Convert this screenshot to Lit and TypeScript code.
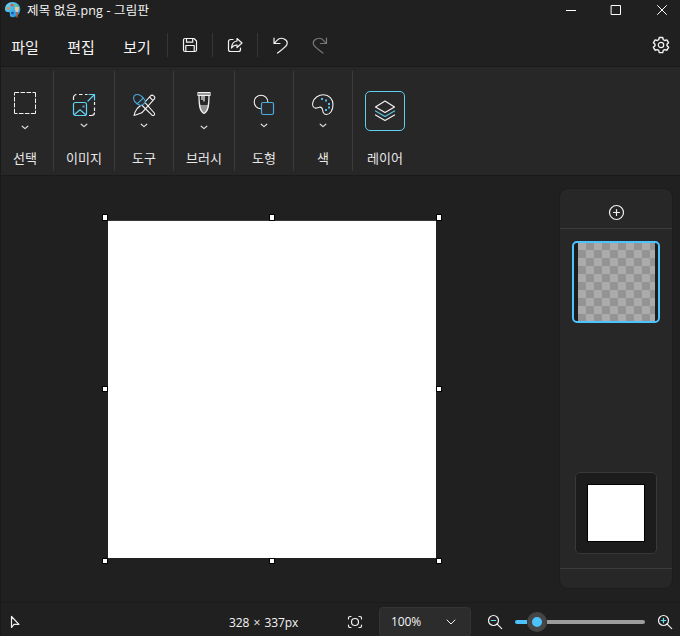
import { LitElement, html, css, svg, type TemplateResult } from 'lit';
import { customElement } from 'lit/decorators.js';

const icon = (w: number, h: number, body: TemplateResult) =>
  html`<svg width=${w} height=${h} viewBox="0 0 ${w} ${h}" fill="none" stroke="#f2f2f2" stroke-width="1.2" stroke-linecap="round" stroke-linejoin="round">${body}</svg>`;

const logo = icon(18, 18, svg`
  <defs><linearGradient id="pal" x1="0" y1="0" x2="1" y2="1"><stop offset="0" stop-color="#6cdff8"/><stop offset="1" stop-color="#1a86d8"/></linearGradient></defs>
  <path d="M8.500 1C12.500 1 16.300 4 16.300 8.300c0 4.500-3.500 7.900-7.500 7.900-2.200 0-3.300-1.200-2.900-3 .3-1.600-.4-2.400-2-2.200C2 11.200 1 10 1 8.300 1 4 4.300 1 8.500 1Z" fill="url(#pal)" stroke="none"/>
  <g stroke="none"><circle cx="8" cy="4.200" r="1.400" fill="#e8493f"/><circle cx="4.300" cy="7.300" r="1.400" fill="#f08a3c"/><circle cx="12" cy="4.500" r="1.300" fill="#66cf62"/><circle cx="8.500" cy="12" r="1.300" fill="#194f9c"/>
  <path d="M11 6h3.800v3.500H11z" fill="#f3c981"/><path d="M11 9h3.800l-.8 2h-2.200z" fill="#c6cbd0"/><path d="M12 11h1.900l-.2 5.500h-1.300z" fill="#bd5b2d"/></g>`);
const save = icon(16, 16, svg`
  <path d="M1.500 3a1.500 1.500 0 0 1 1.500-1.500h9L14.500 4v9a1.500 1.500 0 0 1-1.500 1.500H3A1.500 1.500 0 0 1 1.500 13Z"/>
  <path d="M4.500 1.500v3.700h6.200V1.500M3.800 14.500V8.500h8.400v6"/>`);
const share = icon(16, 16, svg`
  <path d="M6 2.500H3.500a2 2 0 0 0-2 2v8a2 2 0 0 0 2 2h8a2 2 0 0 0 2-2V11"/>
  <path d="M10 1.500 15 6l-5 4.500V8C7.300 8 5.800 9 4.500 11c.3-4 2.300-6.700 5.500-7z"/>`);
const undo = icon(17, 18, svg`<path d="M2 2v5.500h6M2.300 7.300 5 4.400C9-.1 17 3.500 14.700 9 14 10.800 10 13.500 5.500 17"/>`);
const redo = icon(17, 18, svg`<path stroke="#777" d="M14.500 2v5.500h-6M14.200 7.300 11.500 4.400C7.500-.1-.5 3.500 1.800 9 2.500 10.800 6.500 13.500 11 17"/>`);
const gear = icon(18, 18, svg`
  <path stroke-width="1.400" d="m7.300 1.500 3.400 0 .6 2.200 1.400.8 2.200-.6 1.700 2.900L15 8.200v1.600l1.600 1.500-1.700 2.900-2.200-.6-1.400.8-.6 2.200H7.300l-.6-2.200-1.400-.8-2.200.6-1.700-2.900L3 9.800V8.200L1.400 6.800l1.700-2.900 2.200.6 1.400-.8Z"/>
  <circle cx="9" cy="9" r="2.700"/>`);
const caret = icon(8, 5, svg`<path stroke="#ddd" d="M1.200 1.200 4 3.600l2.800-2.400"/>`);

const select = icon(24, 24, svg`<path stroke-width="1" stroke-linecap="butt" stroke-dasharray="4.600 1.400" d="M1.500 1.500h21M22.500 1.500v21M22.500 22.500h-21M1.500 22.500v-21"/>`);
const image = icon(24, 24, svg`
  <path stroke-linecap="butt" d="M1.500 7V4.500a3 3 0 0 1 3-3M7 1.500h3.500M13 1.500h2.500M22.500 9v3M22.500 14.500V18M22.500 19.500a3 3 0 0 1-3 3H17"/>
  <g stroke="#5fd5f3"><rect x="1.500" y="9.500" width="13" height="13" rx="2"/><path d="m2.500 21.500 5.500-4.700 5.500 4.700M16 8l6-6M17 1.500h5.500V7"/><rect x="10.500" y="12.500" width="2" height="2" stroke="none" fill="#4aa9d5"/></g>`);
const tools = icon(24, 24, svg`
  <g stroke-width="1.100">
  <path d="m13.500 8.500 4.800-5.300c2-2.400 5.800.4 3.900 3L9.800 19.800c-2 .8-4.800 2-7.800 2.700.6-2.800 1.700-5 3.200-7l4-3.500M18 4.500l2.800 2.800"/>
  <path d="m13.500 10.200 8.800 9.800c1 1.500-.8 3.200-2.300 2.200L10.200 12.500"/></g>
  <g stroke="#4ba9db" stroke-width="1.100"><path fill="#273238" d="M5 10.800 11.300 5l2 2.500c-.2 2.200-2.200 4.500-5 5Z"/><path d="M5 10.800C.7 8 .8 3 3.500 1.800 6.500.6 9 2.300 11.300 5"/></g>`);
const brush = icon(16, 24, svg`
  <path fill="#929292" stroke="none" d="M3 14h10c-.8 4-2.500 7-5 8-2.500-1-4.200-4-5-8Z"/>
  <path d="M2 1.500h12v3H2zM3 4.500c0 9 .5 16 5 18 4.500-2 5-9 5-18M6 5v3.500M8 5v5"/><path stroke="#999" stroke-width="2" stroke-linecap="butt" d="M2 3h12"/>`);
const shapes = icon(22, 22, svg`
  <circle cx="8" cy="8" r="6.800" stroke-width="1.100"/><rect x="8.500" y="8.500" width="12" height="12" rx="1.500" stroke="#4da9d8" fill="#262c30"/>`);
const palette = icon(24, 24, svg`
  <path stroke-width="1.100" d="M12.500 1.700C18 1.700 22 6 22 11.500c0 6-3 10-6.500 10-2.500 0-3.500-1.800-3.800-4-.3-2.500-1.500-3.800-3.600-3.200-1.600.4-2.200 1-3.600.8-2.500-.3-3.500-3.100-2.700-5.600C3.100 4.700 7.800 1.700 12.500 1.700Z"/>
  <g stroke="none" fill="#55b8ec"><rect x="10" y="5" width="2" height="2"/><rect x="14" y="6.500" width="2" height="2"/><rect x="17" y="10" width="2" height="2"/><rect x="17" y="13.500" width="2" height="2"/><rect x="14" y="16" width="2" height="2"/></g>`);
const layers = icon(24, 24, svg`
  <path d="M12 2 21.500 8 12 13.500 2.500 8Z"/><path stroke="#5cc5e6" d="M2.500 12 12 17.500 21.500 12"/><path d="m2.500 16 9.500 5.500L21.500 16"/>`);

const GROUPS = [
  { label: '선택', icon: select, w: 54, cls: 'low first' },
  { label: '이미지', icon: image, w: 60, cls: '' },
  { label: '도구', icon: tools, w: 58, cls: '' },
  { label: '브러시', icon: brush, w: 60, cls: 'low' },
  { label: '도형', icon: shapes, w: 58, cls: '' },
  { label: '색', icon: palette, w: 58, cls: '' },
];
const HANDLES = ['nw', 'n', 'ne', 'w', 'e', 'sw', 's', 'se'];

@customElement('app-root')
export class AppRoot extends LitElement {
  static styles = css`
    :host { display: flex; flex-direction: column; width: 680px; height: 636px; box-sizing: border-box; background: #202020; color: #f4f4f4; font-family: "Open Sans", "Noto Sans CJK KR", sans-serif; overflow: hidden; border-left: 1px solid #191919; }
    * { box-sizing: border-box; }
    svg { display: block; flex: none; }
    .title { height: 22px; flex: none; display: flex; align-items: center; padding: 0 12px 2px 3px; }
    .name { font-size: 12.5px; margin-left: 5px; line-height: 18px; padding-top: 2px; white-space: nowrap; letter-spacing: 0.16px; }
    .win { margin-left: auto; display: flex; gap: 34px; }
    .min { margin-right: -1px; }
    .menu { height: 44px; flex: none; display: flex; align-items: center; }
    .item { width: 56px; text-align: center; font-size: 15px; line-height: 20px; padding-top: 5px; }
    .item.first { width: 52px; padding-right: 4px; }
    .tool { width: 44px; display: flex; justify-content: center; padding-top: 2px; }
    .tool.wide { width: 45px; }
    .tool.redo { width: 34px; }
    .sep { width: 1px; height: 24px; background: #363636; margin-top: 2px; }
    .menu .sep.one { margin-left: 2px; }
    .gear { margin-left: auto; margin-right: 10px; padding-top: 2px; }
    .ribbon { height: 110px; flex: none; display: flex; background: #272727; border-top: 1px solid #1a1a1a; border-bottom: 1px solid #1a1a1a; padding: 4px 0; margin-left: -1px; }
    .group { display: flex; flex-direction: column; align-items: center; border-right: 1px solid #3b3b3b; box-sizing: content-box; height: 100px; }
    .group.first { box-sizing: border-box; padding-right: 3px; }
    .group.last { border: 0; width: 64px; }
    .glyph { height: 24px; margin-top: 22px; display: flex; align-items: center; }
    .low .glyph { margin-top: 20px; }
    .caret { margin-top: 6px; }
    .low .caret { margin-top: 10px; }
    .label { margin-top: auto; font-size: 13px; line-height: 18px; padding-bottom: 3px; height: 22px; white-space: nowrap; color: #e8e8e8; }
    .active { width: 40px; height: 40px; margin-top: 20px; border: 1px solid #5ecfee; border-radius: 5px; display: flex; align-items: center; justify-content: center; background: #292929; }
    .work { flex: 1; display: flex; min-height: 0; }
    .canvas { position: relative; width: 328px; height: 337px; margin: 45px 0 0 107px; background: #fff; flex: none; box-shadow: 0 -1px 0 #3a373a; }
    .handle { position: absolute; width: 6px; height: 6px; background: #fff; border: 1px solid #000; }
    .nw, .w, .sw { left: -6px; }
    .n, .s { left: 161px; }
    .ne, .e, .se { right: -6px; }
    .nw, .n, .ne { top: -7px; height: 7px; }
    .w, .e { top: 165px; }
    .sw, .s, .se { bottom: -6px; }
    .panel { width: 112px; height: 399px; margin: 13px 8px 0 auto; background: #272727; border-radius: 8px; display: flex; flex-direction: column; align-items: center; box-shadow: 0 0 0 1px #1c1c1c; }
    .add { height: 40px; width: 100%; border-bottom: 1px solid #3b3b3b; display: flex; justify-content: center; align-items: center; padding: 7px 0 0 1px; flex: none; }
    .thumb { width: 88px; height: 82px; margin-top: 12px; border: 2px solid #4cc2ff; border-radius: 5px; background: #1c1c1c; padding: 0 3px 0 4px; flex: none; }
    .checks { height: 100%; background: repeating-conic-gradient(#949494 0 25%, #ababab 0 50%) 0 -1px / 16px 16px; }
    .base { width: 82px; height: 82px; margin-top: auto; margin-bottom: 14px; background: #1c1c1c; border: 1px solid #393939; border-radius: 5px; display: flex; align-items: center; justify-content: center; }
    .sheet { width: 56px; height: 56px; background: #fff; outline: 1px solid #000; }
    .foot { width: 100%; height: 20px; border-top: 1px solid #3b3b3b; flex: none; }
    .status { height: 34px; flex: none; display: flex; align-items: center; border-top: 1px solid #1b1b1b; padding-top: 4px; }
    .cursor { margin-left: 8px; }
    .size { margin-left: auto; width: 71px; font-size: 12px; white-space: nowrap; line-height: 16px; word-spacing: 1.200px; letter-spacing: -0.1px; padding-top: 2px; }
    .fit { margin-left: 47px; }
    .zoom { width: 92px; height: 30px; margin-left: 16px; background: #2c2c2c; border: 1px solid #343434; border-radius: 4px; display: flex; align-items: center; justify-content: space-between; padding: 0 14px 0 11px; font-size: 12px; letter-spacing: -0.1px; }
    .minus { margin-left: 16px; }
    .slider { width: 130px; height: 20px; margin: 0 12px; display: flex; align-items: center; }
    .done { width: 12px; height: 4px; border-radius: 2px 0 0 2px; background: #4cc2ff; }
    .knob { width: 20px; height: 20px; border-radius: 50%; background: #4cc2ff; border: 5px solid #454545; flex: none; }
    .rest { flex: 1; height: 4px; border-radius: 0 2px 2px 0; background: #9c9c9c; }
    .plus { margin-right: 7px; }
  `;

  render() {
    return html`
      <div class="title">
        ${logo}<span class="name">제목 없음.png - 그림판</span>
        <div class="win">
          <div class="min">${icon(12, 12, svg`<path stroke="#fff" stroke-width="1" stroke-linecap="butt" d="M1 6.500h10"/>`)}</div>
          ${icon(12, 12, svg`<rect stroke="#fff" stroke-width="1" x="1.500" y="1.500" width="9" height="9"/>`)}
          ${icon(12, 12, svg`<path stroke="#fff" stroke-width="1" d="m1.500 1.500 9 9M10.500 1.500l-9 9"/>`)}
        </div>
      </div>
      <div class="menu">
        <div class="item first">파일</div><div class="item">편집</div><div class="item">보기</div>
        <div class="sep one"></div><div class="tool">${save}</div>
        <div class="sep"></div><div class="tool">${share}</div>
        <div class="sep"></div><div class="tool wide">${undo}</div><div class="tool redo">${redo}</div>
        <div class="gear">${gear}</div>
      </div>
      <div class="ribbon">
        ${GROUPS.map((g) => html`<div class="group ${g.cls}" style="width:${g.w}px">
          <div class="glyph">${g.icon}</div><div class="caret">${caret}</div><div class="label">${g.label}</div>
        </div>`)}
        <div class="group last"><div class="active">${layers}</div><div class="label">레이어</div></div>
      </div>
      <div class="work">
        <div class="canvas">${HANDLES.map((h) => html`<i class="handle ${h}"></i>`)}</div>
        <div class="panel">
          <div class="add">${icon(17, 17, svg`<circle cx="8.500" cy="8.500" r="7"/><path d="M8.500 5.500v6M5.500 8.500h6"/>`)}</div>
          <div class="thumb"><div class="checks"></div></div>
          <div class="base"><div class="sheet"></div></div>
          <div class="foot"></div>
        </div>
      </div>
      <div class="status">
        <div class="cursor">${icon(12, 14, svg`<path d="M2.500 1.500v11L5 9.300h5Z"/>`)}</div>
        <div class="size">328 × 337px</div>
        <div class="fit">${icon(16, 14, svg`<path d="M4 1.500H3A1.500 1.500 0 0 0 1.500 3v1M12 1.500h1A1.500 1.500 0 0 1 14.500 3v1M4 12.500H3A1.500 1.500 0 0 1 1.500 11v-1M12 12.500h1a1.500 1.500 0 0 0 1.500-1.500v-1"/><circle cx="8" cy="7" r="3.500"/>`)}</div>
        <div class="zoom"><span>100%</span>${icon(10, 6, svg`<path d="m1 1 4 4 4-4" stroke-width="1"/>`)}</div>
        <div class="minus">${icon(16, 16, svg`<circle cx="6.500" cy="6.500" r="5"/><path d="m10.200 10.200 4.500 4.500"/><path stroke="#65e0f2" d="M4.300 6.500h4.400"/>`)}</div>
        <div class="slider"><div class="done"></div><div class="knob"></div><div class="rest"></div></div>
        <div class="plus">${icon(16, 16, svg`<circle cx="6.500" cy="6.500" r="5"/><path d="m10.200 10.200 4.500 4.500"/><path stroke="#65e0f2" d="M4.300 6.500h4.400M6.500 4.300v4.400"/>`)}</div>
      </div>
    `;
  }
}
